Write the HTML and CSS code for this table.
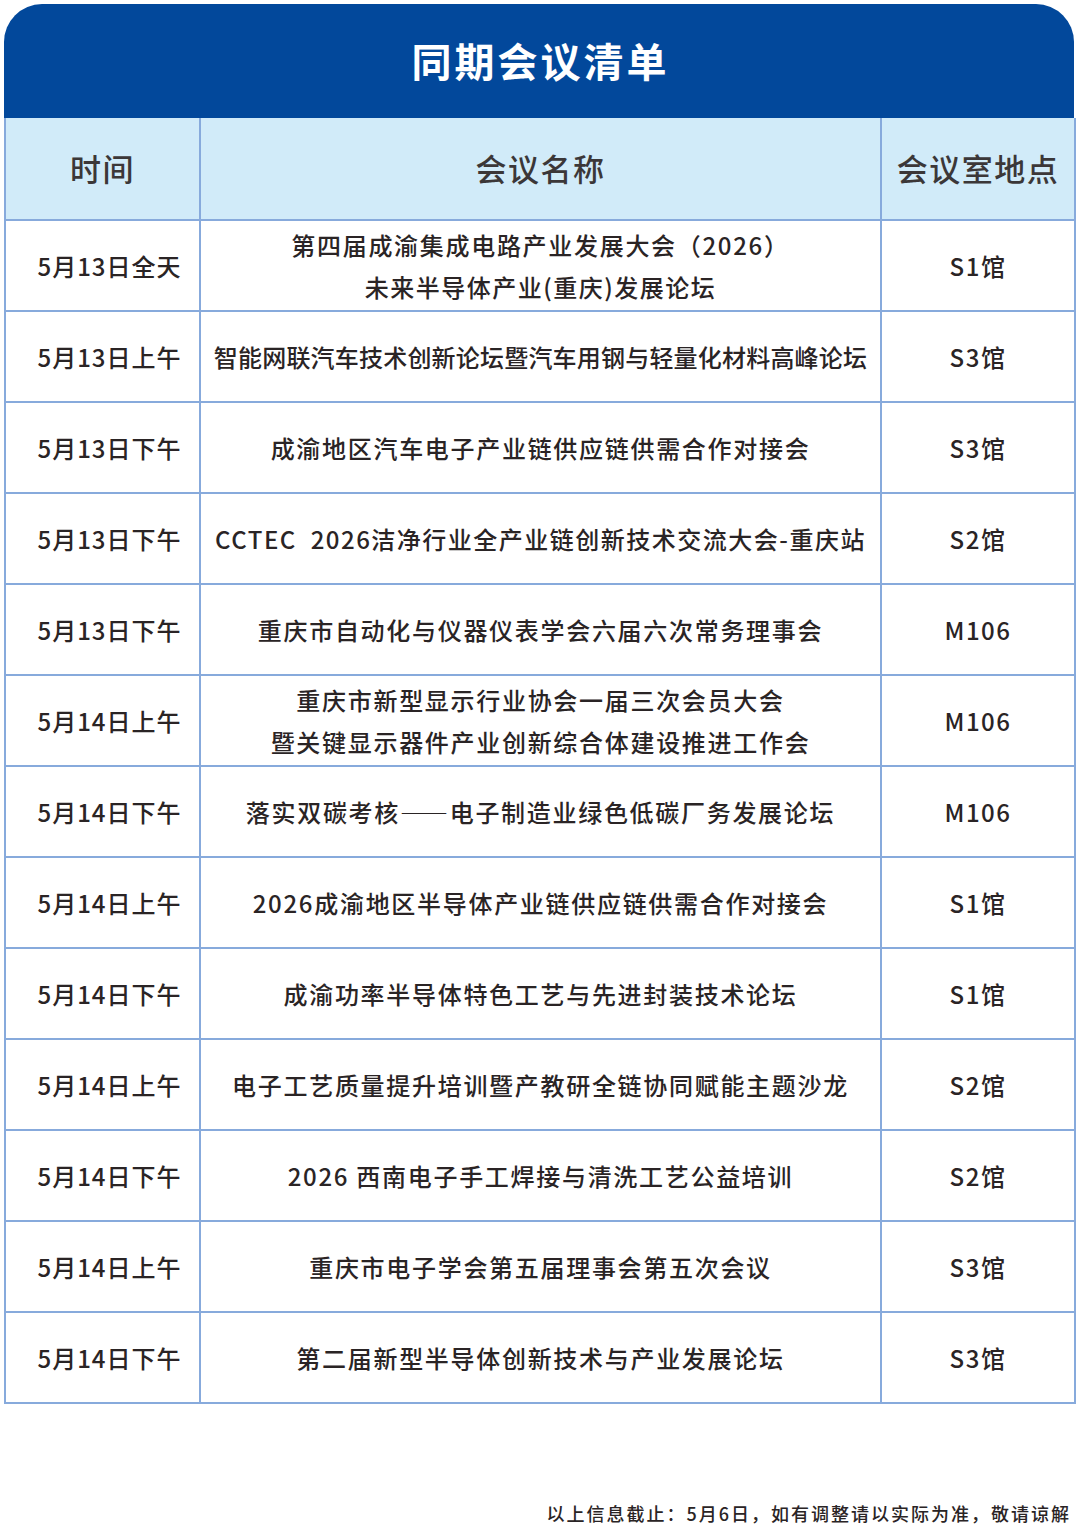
FILE: index.html
```html
<!DOCTYPE html>
<html lang="zh-CN">
<head>
<meta charset="utf-8">
<title>同期会议清单</title>
<link rel="stylesheet" href="styles.css">
</head>
<body>
<div class="page">
  <div class="sheet">
    <div class="banner">同期会议清单</div>
    <table class="grid">
      <colgroup><col class="c-time"><col class="c-name"><col class="c-room"></colgroup>
      <thead>
        <tr><th class="h-time">时间</th><th>会议名称</th><th>会议室地点</th></tr>
      </thead>
      <tbody>
        <tr><td class="t">5月13日全天</td><td class="n"><span class="l1">第四届成渝集成电路产业发展大会（2026）</span><br><span class="l2b">未来半导体产业(重庆)发展论坛</span></td><td class="r">S1馆</td></tr>
        <tr><td class="t">5月13日上午</td><td class="n l0">智能网联汽车技术创新论坛暨汽车用钢与轻量化材料高峰论坛</td><td class="r">S3馆</td></tr>
        <tr><td class="t">5月13日下午</td><td class="n l2">成渝地区汽车电子产业链供应链供需合作对接会</td><td class="r">S3馆</td></tr>
        <tr><td class="t">5月13日下午</td><td class="n l2a">CCTEC&nbsp; 2026洁净行业全产业链创新技术交流大会-重庆站</td><td class="r">S2馆</td></tr>
        <tr><td class="t">5月13日下午</td><td class="n l2">重庆市自动化与仪器仪表学会六届六次常务理事会</td><td class="r">M106</td></tr>
        <tr><td class="t">5月14日上午</td><td class="n l2">重庆市新型显示行业协会一届三次会员大会<br>暨关键显示器件产业创新综合体建设推进工作会</td><td class="r">M106</td></tr>
        <tr><td class="t">5月14日下午</td><td class="n l2">落实双碳考核——电子制造业绿色低碳厂务发展论坛</td><td class="r">M106</td></tr>
        <tr><td class="t">5月14日上午</td><td class="n l2">2026成渝地区半导体产业链供应链供需合作对接会</td><td class="r">S1馆</td></tr>
        <tr><td class="t">5月14日下午</td><td class="n l2">成渝功率半导体特色工艺与先进封装技术论坛</td><td class="r">S1馆</td></tr>
        <tr><td class="t">5月14日上午</td><td class="n l2">电子工艺质量提升培训暨产教研全链协同赋能主题沙龙</td><td class="r">S2馆</td></tr>
        <tr><td class="t">5月14日下午</td><td class="n l2">2026 西南电子手工焊接与清洗工艺公益培训</td><td class="r">S2馆</td></tr>
        <tr><td class="t">5月14日上午</td><td class="n l2">重庆市电子学会第五届理事会第五次会议</td><td class="r">S3馆</td></tr>
        <tr><td class="t">5月14日下午</td><td class="n l2">第二届新型半导体创新技术与产业发展论坛</td><td class="r">S3馆</td></tr>
      </tbody>
    </table>
  </div>
  <p class="note">以上信息截止：5月6日，如有调整请以实际为准，敬请谅解</p>
</div>
</body>
</html>
```

FILE: styles.css
```css
* { box-sizing: border-box; }
html, body { margin: 0; padding: 0; background: #ffffff; }
body {
  font-family: "Noto Sans CJK SC", "Noto Sans", sans-serif;
  color: #2a2425;
}
.page {
  width: 1080px;
  height: 1524px;
  padding: 4px 6px 0 4px;
}
.sheet { width: 1070px; }
.banner {
  height: 114px;
  background: #02489b;
  border-radius: 38px 38px 0 0;
  color: #ffffff;
  font-size: 40px;
  font-weight: 700;
  letter-spacing: 3px;
  text-indent: 3px;
  display: flex;
  align-items: center;
  justify-content: center;
  padding-bottom: 2px;
}
.grid {
  width: 1070px;
  border-collapse: collapse;
  table-layout: fixed;
}
.c-time { width: 195px; }
.c-name { width: 681px; }
.c-room { width: 194px; }
.grid th, .grid td {
  border: 2px solid #87aadc;
  text-align: center;
  vertical-align: middle;
  padding: 0;
}
.grid thead th { border-top: none; }
.grid th {
  background: #d1ebf9;
  height: 102px;
  font-size: 31px;
  font-weight: 500;
  color: #3b3738;
  letter-spacing: 1.5px;
  padding-bottom: 2px;
}
.grid td {
  height: 91px;
  font-size: 24px;
  font-weight: 500;
  line-height: 42px;
}
.grid td.t {
  letter-spacing: 1px;
  padding-left: 14px;
}
.grid td.r { letter-spacing: 1.5px; }
.l0 { letter-spacing: 0.2px; }
.l1 { letter-spacing: 1.7px; }
.l2 { letter-spacing: 1.7px; }
.l2a { letter-spacing: 1.5px; }
.l2b { letter-spacing: 1.5px; }
.note {
  margin: 96px 0 0 0;
  text-align: right;
  font-size: 18px;
  font-weight: 500;
  letter-spacing: 2px;
  color: #2a2425;
  padding-right: 3px;
}
```
